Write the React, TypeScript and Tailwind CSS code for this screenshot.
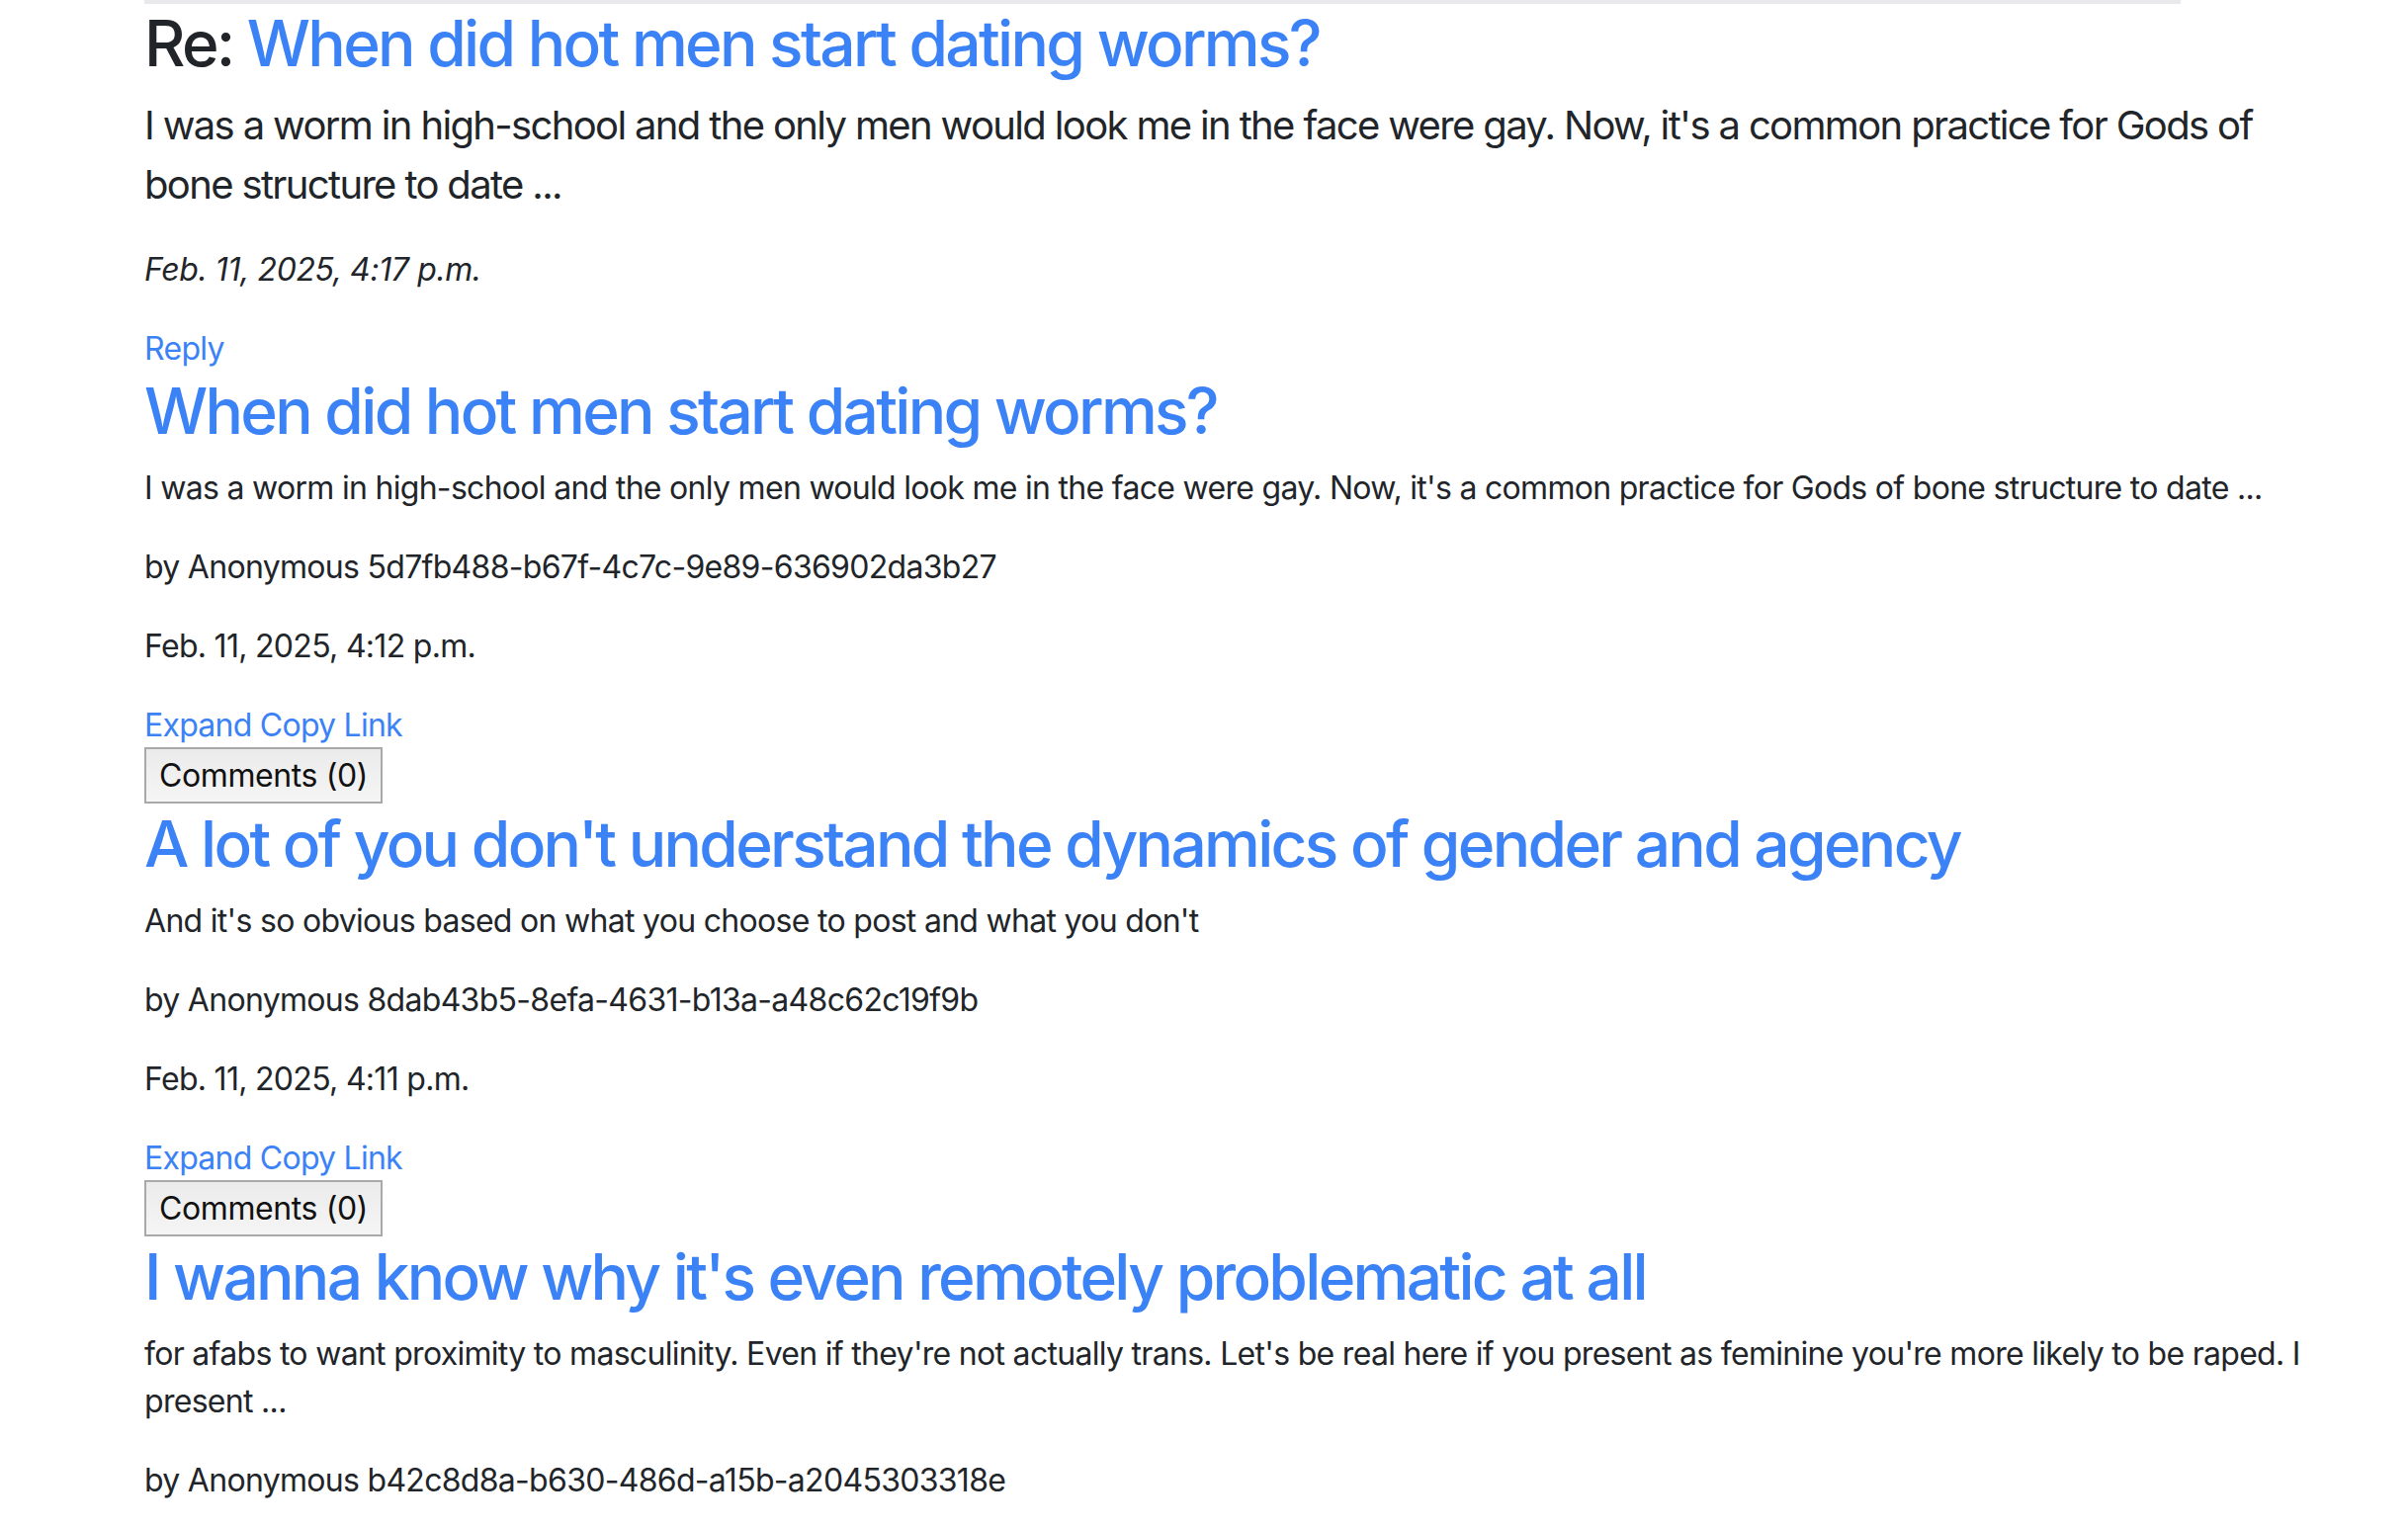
import React from "react";

const posts = [
  {
    title: "When did hot men start dating worms?",
    body: "I was a worm in high-school and the only men would look me in the face were gay. Now, it's a common practice for Gods of bone structure to date ...",
    author: "5d7fb488-b67f-4c7c-9e89-636902da3b27",
    date: "Feb. 11, 2025, 4:12 p.m.",
  },
  {
    title: "A lot of you don't understand the dynamics of gender and agency",
    body: "And it's so obvious based on what you choose to post and what you don't",
    author: "8dab43b5-8efa-4631-b13a-a48c62c19f9b",
    date: "Feb. 11, 2025, 4:11 p.m.",
  },
  {
    title: "I wanna know why it's even remotely problematic at all",
    body: "for afabs to want proximity to masculinity. Even if they're not actually trans. Let's be real here if you present as feminine you're more likely to be raped. I present ...",
    author: "b42c8d8a-b630-486d-a15b-a2045303318e",
    date: "Feb. 11, 2025, 4:10 p.m.",
  },
];

export default function App() {
  return (
    <div
      className="min-h-screen bg-white text-[#212529] pl-[146px] pr-[80px] overflow-hidden"
      style={{ fontFamily: "Inter, 'Liberation Sans', sans-serif" }}
    >
      <div className="w-[2060px] h-[4px] bg-[#e9e9ec]" />
      <div className="pt-[1px]">
        <h2 className="text-[64px] leading-[77px] font-medium mb-[15px] tracking-[-2.7px]">
          Re: <a className="text-[#3b82f6]">When did hot men start dating worms?</a>
        </h2>
        <p className="text-[40px] leading-[60px] mb-[32px] tracking-[-1.65px]">
          I was a worm in high-school and the only men would look me in the face were gay. Now, it's a common practice for Gods of bone structure to date ...
        </p>
        <p className="text-[32px] leading-[48px] italic mb-[32px] tracking-[-0.4px]">Feb. 11, 2025, 4:17 p.m.</p>
        <div className="text-[32px] leading-[48px] tracking-[-0.7px]">
          <a className="text-[#3b82f6]">Reply</a>
        </div>
      </div>
      {posts.map((p) => (
        <div key={p.author}>
          <h2 className="text-[64px] leading-[77px] font-medium mb-[16px] tracking-[-2.7px]">
            <a className="text-[#3b82f6]">{p.title}</a>
          </h2>
          <div className="text-[32px] leading-[48px] tracking-[-0.7px]">
            <p className="mb-[32px]">{p.body}</p>
            <p className="mb-[32px]">by Anonymous {p.author}</p>
            <p className="mb-[32px]">{p.date}</p>
            <div className="tracking-[-0.75px]">
              <a className="text-[#3b82f6]">Expand</a> <a className="text-[#3b82f6]">Copy Link</a>
            </div>
          </div>
          <div className="h-[57px]">
            <button className="h-[57px] w-[241px] -mt-[2px] border-2 border-[#a9a9a9] bg-gradient-to-b from-[#ebebeb] to-[#f5f5f5] text-[32px] text-[#111] leading-none tracking-[-0.4px]">
              Comments (0)
            </button>
          </div>
        </div>
      ))}
    </div>
  );
}
